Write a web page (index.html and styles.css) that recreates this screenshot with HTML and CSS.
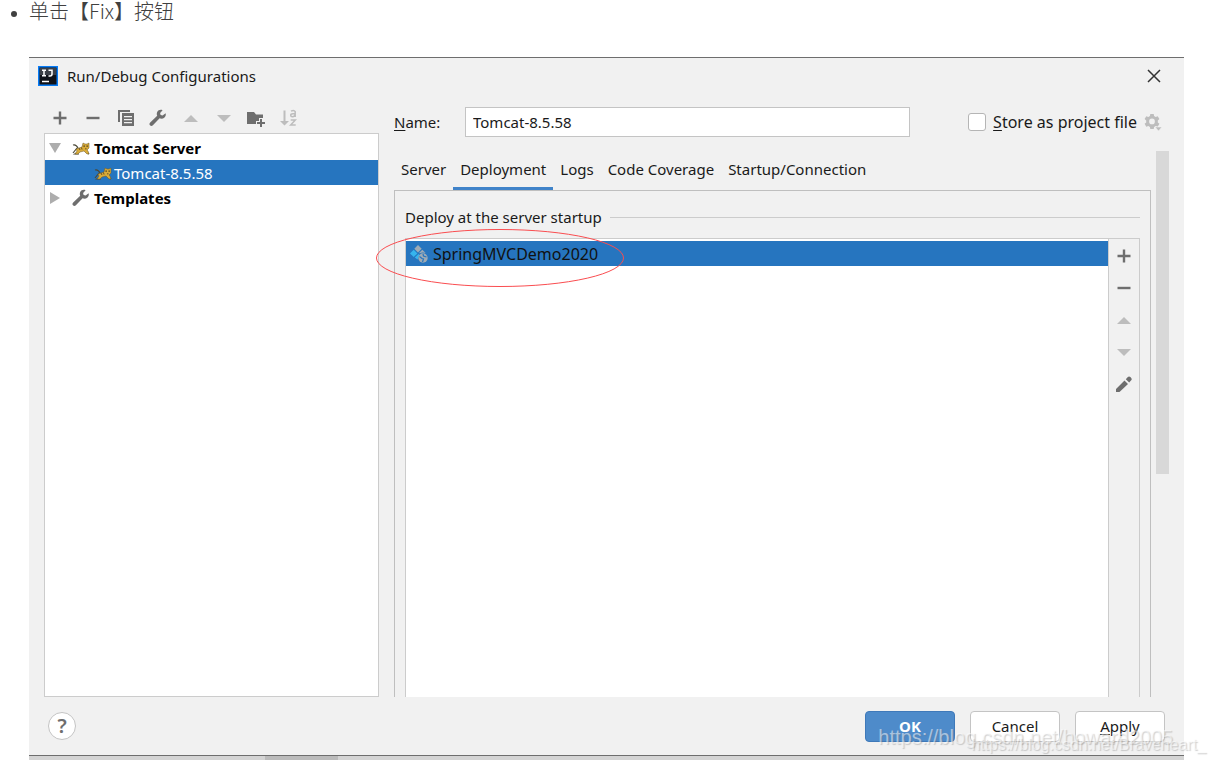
FILE: index.html
```html
<!DOCTYPE html>
<html lang="zh-CN">
<head>
<meta charset="utf-8">
<meta name="viewport" content="width=device-width, initial-scale=1">
<title>Run/Debug Configurations</title>
<link rel="stylesheet" href="styles.css">
</head>
<body>
<svg class="sprite" aria-hidden="true">
  <symbol id="plus" viewBox="0 0 16 16"><path d="M6.800 1.500h2.400v5.300h5.300v2.400H9.200v5.300H6.800V9.200H1.500V6.800h5.300z"/></symbol>
  <symbol id="minus" viewBox="0 0 16 16"><path d="M1.500 6.800h13v2.400h-13z"/></symbol>
  <symbol id="up" viewBox="0 0 16 16"><path d="M1 12l7-7 7 7z"/></symbol>
  <symbol id="down" viewBox="0 0 16 16"><path d="M1 5h14l-7 7z"/></symbol>
  <symbol id="wrench" viewBox="0 0 18 18"><path d="M16.600 4.200l-3 2.300-2-.4-.5-2L13.600 1.200C11.500.4 9.200 1 8.200 3c-.6 1.300-.5 2.700 0 3.800L1.200 13.400c-1 1-.9 2.200-.2 2.900.8.8 2 .8 2.900-.1l6.700-6.900c1.700.7 3.600.3 4.900-.9 1.200-1.100 1.600-2.700 1.100-4.200z"/></symbol>
  <symbol id="cat" viewBox="0 0 18 16">
    <path d="M1 5c3-1 4 1 5 3M5 8l-4 5M8 11l-5 3h4M13 11l4 3" fill="none" stroke="#4b4939" stroke-width="1.200"/>
    <path d="M4 9l6-2 1-4 2 1h2l2-1v5l-2 2 1 1 1 3h-2l-3-3-4 1-2 2H3l2-3z" fill="#d9ab38" stroke="#6b582b" stroke-width=".5"/>
    <path d="M11.500 5.500h1.300v1.200h-1.300zM14.500 5.500h1.300v1.200h-1.300zM13 8.500h1.500v.7H13z" fill="#40351c"/>
    <path d="M7 8l1 2M9.500 7.500l.5 2" stroke="#6b5120"/>
  </symbol>
</svg>

<ul class="steps"><li>单击【Fix】按钮</li></ul>

<main class="dialog">
  <header class="titlebar">
    <svg class="logo" viewBox="0 0 20 20"><path fill="#087cf6" d="M0 0h20v20H0z"/><path fill="#101319" d="M1.500 1.500h17v17h-17z"/><path fill="#3c4047" d="M2 2h16v7H2z"/><path d="M4 4.200h4M6 4v6M4 9.800h4M10.500 4.200H14V8q0 2-2 2h-1.500M4 15.500h7" fill="none" stroke="#fff" stroke-width="1.500"/></svg>
    <h1 class="title">Run/Debug Configurations</h1>
    <button class="close" type="button" aria-label="Close"><svg viewBox="0 0 14 14"><path d="M1 1l12 12M13 1L1 13" fill="none" stroke="#333" stroke-width="1.500"/></svg></button>
  </header>

  <div class="workspace">
    <aside class="sidebar">
      <div class="toolbar">
        <button class="tool" type="button" aria-label="Add"><svg class="icon"><use href="#plus"/></svg></button>
        <button class="tool" type="button" aria-label="Remove"><svg class="icon"><use href="#minus"/></svg></button>
        <button class="tool" type="button" aria-label="Copy"><svg class="icon" viewBox="0 0 16 16"><path d="M0 0h12v2H2v10H0z"/><path fill-rule="evenodd" d="M4 3h12v13H4zm2 3v1.200h8V6zm0 3v1.200h8V9zm0 3v1.200h8V12z"/></svg></button>
        <button class="tool" type="button" aria-label="Edit templates"><svg class="icon large"><use href="#wrench"/></svg></button>
        <button class="tool" type="button" aria-label="Move up" disabled><svg class="icon"><use href="#up"/></svg></button>
        <button class="tool" type="button" aria-label="Move down" disabled><svg class="icon"><use href="#down"/></svg></button>
        <button class="tool" type="button" aria-label="New folder"><svg class="icon large" viewBox="0 0 18 18"><path d="M0 3h7l2 2.500h7V9h-4v3H9v3H0z"/><path d="M13 10h2v3h3v2h-3v3h-2v-3h-3v-2h3z"/></svg></button>
        <button class="tool" type="button" aria-label="Sort" disabled><svg class="icon large" viewBox="0 0 18 18"><path d="M3.500 1.500h2V12H9l-4.500 4.500L0 12h3.500z"/><path d="M11 2.200q3-1.500 4.200.5V8M15 4.700h-2q-2.300 0-2.300 1.500 0 1.500 1.800 1.500Q15 7.500 15 5.500M10.700 11h4.600l-4.600 5h5" fill="none" stroke="currentColor" stroke-width="1.500"/></svg></button>
      </div>
      <ul class="tree">
        <li class="row group"><svg class="arrow" viewBox="0 0 12 12"><path d="M0 1h12L6 11z"/></svg><svg class="cat"><use href="#cat"/></svg>Tomcat Server</li>
        <li class="row child selected"><svg class="cat"><use href="#cat"/></svg>Tomcat-8.5.58</li>
        <li class="row group"><svg class="arrow" viewBox="0 0 12 12"><path d="M1 0v12l10-6z"/></svg><svg class="icon large"><use href="#wrench"/></svg>Templates</li>
      </ul>
    </aside>

    <section class="editor">
      <div class="namerow">
        <label class="namelabel" for="name"><u>N</u>ame:</label>
        <input class="name" id="name" type="text" value="Tomcat-8.5.58">
        <div class="store">
          <input class="check" id="store" type="checkbox"><label for="store"><u>S</u>tore as project file</label>
          <button class="tool" type="button" aria-label="Storage options" disabled><svg class="icon large" viewBox="0 0 18 18"><path fill-rule="evenodd" d="M6.300 1h3.400l.4 2 1.600.9 2-.7 1.700 2.900-1.600 1.400v1.900l1.600 1.300-1.700 3-2-.7-1.600.9-.4 2H6.300l-.4-2-1.600-.9-2 .7-1.700-3 1.600-1.300V7.500L.6 6.100l1.700-2.900 2 .7L5.900 3zM8 5.600a2.800 2.800 0 1 0 0 5.700 2.800 2.800 0 0 0 0-5.700z"/><path d="M11 14h7l-3.500 4z" stroke="#f1f1f1" stroke-width=".6"/></svg></button>
        </div>
      </div>
      <div class="detail">
        <div class="content">
          <div class="tabs" role="tablist">
            <button class="tab" type="button" role="tab">Server</button>
            <button class="tab active" type="button" role="tab" aria-selected="true">Deployment</button>
            <button class="tab" type="button" role="tab">Logs</button>
            <button class="tab" type="button" role="tab">Code Coverage</button>
            <button class="tab" type="button" role="tab">Startup/Connection</button>
          </div>
          <div class="panel">
            <h2 class="section">Deploy at the server startup</h2>
            <div class="deploy">
              <ul class="artifacts">
                <li class="artifact">
                  <svg class="icon large" viewBox="0 0 18 18"><path fill="#9eabb5" d="M8 0l3.700 3.700L8 7.400 4.300 3.700z"/><path fill="#36b4ed" d="M3.700 4.700l3.700 3.700-3.700 3.700L0 8.400zM8.500 9l1 1-2 4.500L4.800 12.500z"/><path fill="#9eabb5" d="M12.300 4.700l3.300 3.300q-3-1.300-5.800.3L9 8z"/><circle cx="13" cy="13" r="4.700" fill="#9eabb5"/><path d="M9.500 11.500l2.500 2 1.500.5-1 3M13 9l.5 2 3 1" stroke="#2675bf" fill="none" stroke-width="1.200"/></svg>
                  SpringMVCDemo2020
                </li>
              </ul>
              <div class="sidetools">
                <button class="tool" type="button" aria-label="Add artifact"><svg class="icon"><use href="#plus"/></svg></button>
                <button class="tool" type="button" aria-label="Remove artifact"><svg class="icon"><use href="#minus"/></svg></button>
                <button class="tool" type="button" aria-label="Artifact up" disabled><svg class="icon"><use href="#up"/></svg></button>
                <button class="tool" type="button" aria-label="Artifact down" disabled><svg class="icon"><use href="#down"/></svg></button>
                <button class="tool" type="button" aria-label="Edit artifact"><svg class="icon large" viewBox="0 0 18 18"><path d="M1 14l8.500-8.500 3.500 3.500L4.500 17H1zM10.800 4.200l1.800-2c1-1 2-.9 2.800-.1l.8.8c.8.9.7 1.800-.2 2.700l-1.800 2z"/></svg></button>
              </div>
              <svg class="mark" viewBox="0 0 248 58" aria-hidden="true"><ellipse cx="124" cy="29" rx="123.500" ry="28.500" fill="none" stroke="#fa4d50"/></svg>
            </div>
          </div>
        </div>
        <div class="scroll"><div class="thumb"></div></div>
      </div>
    </section>
  </div>

  <footer class="footer">
    <button class="help" type="button" aria-label="Help">?</button>
    <div class="actions">
      <button class="button primary" type="button">OK</button>
      <button class="button" type="button">Cancel</button>
      <button class="button" type="button"><u>A</u>pply</button>
    </div>
    <span class="watermark first">https://blog.csdn.net/howard2005</span>
    <span class="watermark second">https://blog.csdn.net/Braveheart_</span>
  </footer>
</main>
<div class="behind"><div class="behindtab"></div></div>
</body>
</html>
```

FILE: styles.css
```css
* { box-sizing: border-box; }

body {
  margin: 0;
  padding-bottom: 3px;
  min-height: 100vh;
  display: flex;
  flex-direction: column;
  background: #fff;
  color: #1a1a1a;
  font: 15px/24px "Noto Sans", "Noto Sans CJK SC", sans-serif;
  overflow-x: hidden;
}

button, input { font: inherit; color: inherit; }
button { padding: 0; border: 0; background: none; }
ul { list-style: none; margin: 0; padding: 0; }
h1, h2 { margin: 0; font-size: 15px; font-weight: 400; }
u { text-underline-offset: 2px; }
svg { display: block; flex: none; }
.sprite { position: absolute; width: 0; height: 0; }

.steps {
  list-style: disc;
  height: 57px;
  padding-left: 29px;
  color: #404040;
  font: 300 20px/22px "Noto Sans CJK SC", sans-serif;
}
.steps li::marker { font-size: 15px; }

.dialog {
  flex: 1;
  display: flex;
  flex-direction: column;
  margin: 0 30px 0 29px;
  border-top: 1px solid #6e6e6e;
  border-bottom: 1px solid #6e6e6e;
  background: #f1f1f1;
}

.titlebar { display: flex; align-items: center; height: 36px; padding: 0 23px 0 9px; }
.logo { width: 20px; height: 20px; }
.title { flex: 1; margin-left: 9px; }
.close svg { width: 14px; height: 14px; }

.workspace { flex: 1; display: flex; gap: 15px; padding: 0 15px; }
.sidebar { flex: 0 0 335px; display: flex; flex-direction: column; }
.toolbar { display: flex; height: 39px; padding-top: 8px; }
.tool {
  display: grid;
  place-items: center;
  flex: none;
  width: 32px;
  height: 32px;
  color: #6e6e6e;
}
.toolbar .tool { flex: 0 1 9.75%; }
.tool:disabled { color: #bdbdbd; }
.icon { width: 16px; height: 16px; fill: currentColor; }
.icon.large { width: 18px; height: 18px; }

.tree { flex: 1; padding-top: 1px; border: 1px solid #ccc; background: #fff; }
.row { display: flex; align-items: center; height: 25px; padding-left: 4px; color: #000; line-height: 22px; }
.group { font-weight: 700; }
.arrow { width: 12px; height: 12px; margin-right: 11px; fill: #adadad; }
.cat { width: 18px; height: 16px; margin-right: 4px; }
.group .icon { margin-right: 4px; color: #6e6e6e; }
.child { padding-left: 49px; }
.child .cat { margin-right: 2px; }
.selected { background: #2675bf; color: #fff; }

.editor { flex: 1; display: flex; flex-direction: column; }
.namerow { display: flex; align-items: center; padding-top: 13px; }
.namelabel { width: 71px; }
.name {
  flex: 1;
  min-width: 0;
  height: 30px;
  padding: 0 7px;
  border: 1px solid #c4c4c4;
  background: #fff;
}
.store { display: flex; align-items: center; height: 30px; margin-left: 58px; font-size: 16px; }
.check {
  appearance: none;
  width: 18px;
  height: 18px;
  margin: 0 7px 0 0;
  border: 1px solid #b5b5b5;
  border-radius: 3px;
  background: #fff;
}

.detail { flex: 1; display: flex; gap: 5px; margin-top: 14px; }
.content { flex: 1; display: flex; flex-direction: column; }
.tabs { display: flex; }
.tab { height: 39px; padding: 0 7px; border-bottom: 3px solid transparent; }
.active { border-color: #4083c9; }
.panel {
  flex: 1;
  display: flex;
  flex-direction: column;
  padding: 14px 10px 0;
  border: 1px solid #bfbfbf;
  border-bottom: 0;
}
.section { display: flex; align-items: center; gap: 8px; }
.section::after { content: ""; flex: 1; border-top: 1px solid #ccc; }
.deploy { flex: 1; display: flex; position: relative; margin-top: 9px; border: 1px solid #ccc; border-bottom: 0; }
.artifacts { flex: 1; padding-top: 2px; background: #fff; }
.artifact { display: flex; align-items: center; gap: 5px; height: 25px; padding-left: 4px; background: #2675bf; color: #111; font-size: 16px; }
.sidetools { padding-top: 1px; border-left: 1px solid #ccc; }
.sidetools .tool { width: 30px; }
.mark { position: absolute; left: -30px; top: -10px; width: 248px; height: 58px; }
.scroll { width: 13px; }
.thumb { width: 13px; height: 323px; background: #d8d8d8; }

.footer { position: relative; display: flex; align-items: center; justify-content: space-between; height: 58px; padding: 0 19px; }
.help {
  width: 28px;
  height: 28px;
  border: 1px solid #c4c4c4;
  border-radius: 50%;
  background: #fff;
  color: #6e6e6e;
  font-size: 20px;
  font-weight: 600;
  line-height: 24px;
}
.actions { display: flex; gap: 15px; }
.button { width: 90px; height: 31px; border: 1px solid #c4c4c4; border-radius: 4px; background: #fff; }
.primary { border-color: #3f79b9; background: #4e8bca; color: #fff; font-weight: 700; }

.watermark {
  position: absolute;
  color: rgba(255, 255, 255, .5);
  font-family: "Liberation Sans", Arial, sans-serif;
  text-shadow: 1px 1px 1px rgba(120, 120, 120, .35);
  white-space: nowrap;
  pointer-events: none;
}
.first { right: 11px; bottom: 6px; font-size: 20px; }
.second { right: -22px; bottom: -2px; font-size: 16px; }

.behind { height: 4px; margin: 0 30px 0 29px; background: #d4d4d4; }
.behindtab { width: 73px; height: 4px; margin-left: 236px; background: #bbb; }
```
